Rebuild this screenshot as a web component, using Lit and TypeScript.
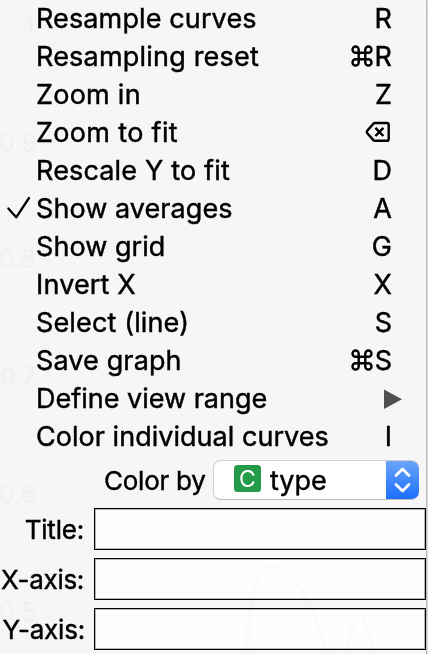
import { LitElement, html, css, svg } from "lit";
import { customElement } from "lit/decorators.js";

interface Item {
  label: string;
  key: string;
  ls: number;
  cmd?: boolean;
  checked?: boolean;
}

const items: Item[] = [
  { label: "Resample curves", key: "R", ls: 0.12 },
  { label: "Resampling reset", key: "R", cmd: true, ls: 0.2 },
  { label: "Zoom in", key: "Z", ls: 0.25 },
  { label: "Zoom to fit", key: "delete", ls: 0.33 },
  { label: "Rescale Y to fit", key: "D", ls: 0.16 },
  { label: "Show averages", key: "A", checked: true, ls: 0.06 },
  { label: "Show grid", key: "G", ls: 0.06 },
  { label: "Invert X", key: "X", ls: 0.16 },
  { label: "Select (line)", key: "S", ls: 0.14 },
  { label: "Save graph", key: "S", cmd: true, ls: 0.12 },
  { label: "Define view range", key: "submenu", ls: 0 },
  { label: "Color individual curves", key: "I", ls: 0.03 },
];

const fields = [
  { label: "Title:", ls: -0.2, pad: 2 },
  { label: "X-axis:", ls: -0.3, pad: 2 },
  { label: "Y-axis:", ls: -0.2, pad: 1 },
];

const ticks = [
  { text: "1", x: 24, y: 35 },
  { text: "0.9", x: -1, y: 152 },
  { text: "0.8", x: -1, y: 268 },
  { text: "0.7", x: 0, y: 386 },
  { text: "0.6", x: -1, y: 503 },
  { text: "0.5", x: -1, y: 621 },
];

@customElement("app-root")
export class AppRoot extends LitElement {
  static styles = css`
    :host {
      display: block;
      position: relative;
      box-sizing: border-box;
      width: 428px;
      height: 654px;
      overflow: hidden;
      background: #f6f6f6;
      color: #000;
      font: 400 27px/38px Inter, "Liberation Sans", sans-serif;
      -webkit-text-stroke: 0.45px #000;
      white-space: nowrap;
    }
    .ghost { position: absolute; inset: 0; -webkit-text-stroke: 0; }
    .curves { mix-blend-mode: multiply; }
    .menu { position: relative; }
    .item { display: flex; height: 38px; align-items: center; padding: 0 36px 0 6px; }
    .check { width: 30px; height: 38px; flex: none; }
    .label { flex: 1; }
    .keys { display: flex; align-items: center; }
    .cmd { margin: -2px 2px 0 0; }
    .form { position: relative; }
    .colorby { display: flex; height: 40px; margin-top: 4px; padding-left: 104px; align-items: center; }
    .cb-label { width: 109px; flex: none; font-size: 26px; letter-spacing: -0.25px; padding-top: 1px; box-sizing: border-box; }
    .select {
      display: flex; width: 206px; height: 40px; box-sizing: border-box; border-radius: 8px;
      overflow: hidden; background: #fff; align-items: center;
      border: 1px solid #cfcfcf; border-bottom-color: #bdbdbd; border-right: 0;
    }
    .badge { width: 27px; height: 27px; margin: -4px 0 0 20px; flex: none; }
    .type { flex: 1; padding: 1px 0 0 9px; }
    .stepper { width: 33px; height: 40px; margin: -1px 0; flex: none; background: linear-gradient(#6ba6f9, #1a6dfc); }
    .fields { display: grid; gap: 8px; margin-top: 8px; }
    .field { display: flex; height: 42px; align-items: center; }
    .f-label { width: 86px; margin-right: 8px; padding-top: 1px; box-sizing: border-box; display: flex; justify-content: flex-end; font-size: 26px; flex: none; }
    .box { width: 332px; height: 42px; box-sizing: border-box; background: #fefefe; border: 1px solid #000; box-shadow: inset 0 0 0 1px #b4b4b4; }
    .edge { position: absolute; top: 0; right: 0; width: 2px; height: 654px; box-sizing: border-box; background: linear-gradient(#dcdcdc 14px, #b9bd4a 14px, #b9bd4a 15px, #dcdcdc 15px); border-left: 1px solid #bcbcbc; }
    svg { display: block; }
  `;

  private cmd() {
    return html`<svg class="cmd" width="22" height="22" viewBox="0.5 1 22 22" fill="none" stroke="#000" stroke-width="2.400">
      <path d="M8.200 8.700H14.800V15.300H8.200Z M8.200 8.700H5.100A3.100 3.100 0 1 1 8.200 5.600Z M14.800 8.700V5.600A3.100 3.100 0 1 1 17.900 8.700Z M14.800 15.300H17.900A3.100 3.100 0 1 1 14.800 18.400Z M8.200 15.300V18.400A3.100 3.100 0 1 1 5.100 15.300Z"/></svg>`;
  }

  private key(i: Item) {
    if (i.key === "delete")
      return html`<svg width="27" height="38" viewBox="0 0 27 38" fill="none" stroke="#000" stroke-width="2.400" stroke-linejoin="round">
        <path d="M10 9H21.800Q23.700 9 23.700 10.900V24.900Q23.700 26.800 21.800 26.800H10Q9.100 26.800 8.400 26.100L2.300 19.200Q1.400 17.900 2.300 16.600L8.400 9.700Q9.100 9 10 9Z"/>
        <path d="M10.400 13.800L18.400 22M18.400 13.800L10.400 22" stroke-width="2.500"/></svg>`;
    if (i.key === "submenu")
      return html`<svg width="8" height="38" overflow="visible"><path d="M0 9.500L18 19.200L0 29Z" fill="#505050"/></svg>`;
    return html`${i.cmd ? this.cmd() : ""}<span>${i.key}</span>`;
  }

  render() {
    return html`
      <svg class="ghost" width="428" height="654" font-size="25">
        <path d="M48.500 0V654M48 44.500H55M48 260.500H55M48 494.500H55" stroke="#f2f2f2" />
        ${ticks.map((t) => svg`<text x=${t.x} y=${t.y} fill="#f0f0f0">${t.text}</text>`)}
      </svg>
      <div class="menu">
        ${items.map((i) => html`<div class="item">
          <svg class="check" viewBox="0 0 30 38">${i.checked ? svg`<path d="M2.300 18.500L10.200 27.300L23 8" fill="none" stroke="#000" stroke-width="2.300" stroke-linecap="round" stroke-linejoin="round"/>` : ""}</svg>
          <span class="label" style="letter-spacing:${i.ls}px">${i.label}</span>
          <span class="keys">${this.key(i)}</span>
        </div>`)}
      </div>
      <div class="form">
        <div class="colorby">
          <span class="cb-label">Color by</span>
          <div class="select">
            <svg class="badge" viewBox="0 0 27 27"><rect width="27" height="27" rx="3.500" fill="#249b49"/><text x="13.500" y="21.500" font-size="23" text-anchor="middle" fill="#fff" style="-webkit-text-stroke:0.500px #fff">C</text></svg>
            <span class="type">type</span>
            <svg class="stepper" viewBox="0 0 33 40"><path d="M10 15.500L16.500 9L23 15.500M10 24.500L16.500 31L23 24.500" fill="none" stroke="#fff" stroke-width="2.800" stroke-linecap="round" stroke-linejoin="round"/></svg>
          </div>
        </div>
        <div class="fields">
          ${fields.map((f) => html`<div class="field"><span class="f-label" style="letter-spacing:${f.ls}px;padding-right:${f.pad}px">${f.label}</span><div class="box"></div></div>`)}
        </div>
      </div>
      <svg class="ghost curves" width="428" height="654" fill="none" stroke="#fcfcfa" stroke-width="5">
        <path d="M246 654C250 600 256 565 271 565S302 590 312 610S320 640 327 654M347 654C350 625 355 615 360 615S369 635 374 654" />
      </svg>
      <div class="edge"></div>
    `;
  }
}
